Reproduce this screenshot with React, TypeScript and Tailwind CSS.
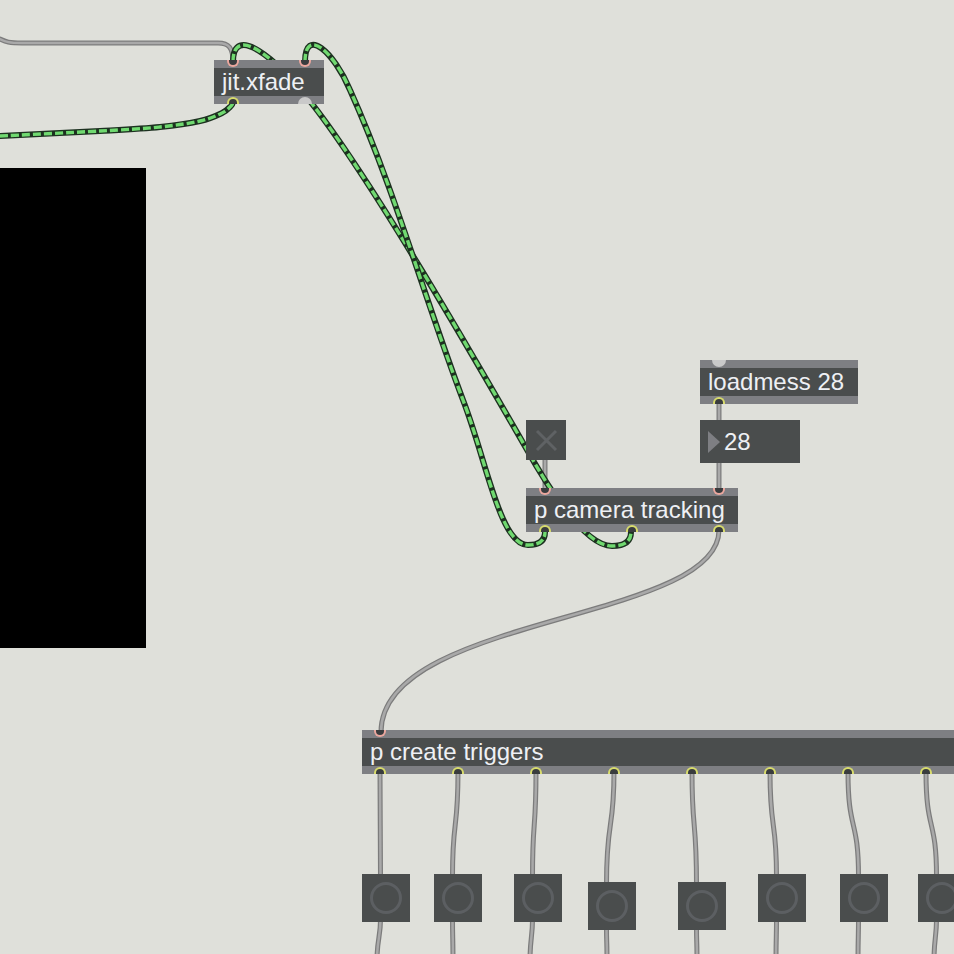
import React from "react";

type Pt = [number, number];

// catmull-rom through the points, turned into cubic segments
function smooth(pts: Pt[]): string {
  let d = `M${pts[0][0]} ${pts[0][1]}`;
  for (let i = 0; i < pts.length - 1; i++) {
    const p0 = pts[i - 1] || pts[i];
    const p1 = pts[i];
    const p2 = pts[i + 1];
    const p3 = pts[i + 2] || p2;
    const c1x = p1[0] + (p2[0] - p0[0]) / 6;
    const c1y = p1[1] + (p2[1] - p0[1]) / 6;
    const c2x = p2[0] - (p3[0] - p1[0]) / 6;
    const c2y = p2[1] - (p3[1] - p1[1]) / 6;
    d += ` C${c1x.toFixed(1)} ${c1y.toFixed(1)} ${c2x.toFixed(1)} ${c2y.toFixed(1)} ${p2[0]} ${p2[1]}`;
  }
  return d;
}

// camera tracking out 2 -> xfade in 1
const cordA =
  "M233 62 C233 24 274 55 313 105 C375 185 480 368 526 448 C549 489 585 546 612 546 C624 546 631 542 631 532";
// camera tracking out 1 -> xfade in 2
const cordB =
  "M305 62 C305 26 334 52 350 90 C395 190 425 300 463 400 C487 462 500 545 528 545 C540 545 545 540 545 532";

const cordLeft: Pt[] = [[0, 136], [100, 131], [160, 127], [200, 121], [222, 113], [231, 106], [233, 102]];

const buttons: { x: number; y: number; cls: string }[] = [
  { x: 362, y: 874, cls: "left-[362px] top-[874px]" },
  { x: 434, y: 874, cls: "left-[434px] top-[874px]" },
  { x: 514, y: 874, cls: "left-[514px] top-[874px]" },
  { x: 588, y: 882, cls: "left-[588px] top-[882px]" },
  { x: 678, y: 882, cls: "left-[678px] top-[882px]" },
  { x: 758, y: 874, cls: "left-[758px] top-[874px]" },
  { x: 840, y: 874, cls: "left-[840px] top-[874px]" },
  { x: 918, y: 874, cls: "left-[918px] top-[874px]" },
];
const outletX = [380, 458, 536, 614, 692, 770, 848, 926];
const belowEnd = [377, 453, 530, 607, 697, 776, 858, 934];

function Cord({ d, matrix }: { d: string; matrix?: boolean }) {
  if (matrix) {
    return (
      <g fill="none">
        <path d={d} stroke="#1d3120" strokeWidth={6} strokeLinecap="round" />
        <path d={d} stroke="#70d970" strokeWidth={3.4} strokeDasharray="8 3" />
      </g>
    );
  }
  return (
    <g fill="none">
      <path d={d} stroke="#7c7c7c" strokeWidth={5} strokeLinecap="round" />
      <path d={d} stroke="#a9a9a9" strokeWidth={2.5} strokeLinecap="round" />
    </g>
  );
}

const Inlet = () => (
  <div className="w-[12px] h-[7px] rounded-b-full border-2 border-t-0 border-[#eba79e] bg-[#393c3e]" />
);
const Outlet = () => (
  <div className="w-[12px] h-[7px] rounded-t-full border-2 border-b-0 border-[#d8dc6c] bg-[#393c3e]" />
);
const GrayIn = () => <div className="w-[14px] h-[7px] rounded-b-full bg-[#c9c9c9]" />;
const GrayOut = () => <div className="w-[14px] h-[7px] rounded-t-full bg-[#c9c9c9]" />;

function MaxBox({
  cls,
  text,
  top,
  bottom,
}: {
  cls: string;
  text: string;
  top: React.ReactNode;
  bottom: React.ReactNode;
}) {
  return (
    <div className={`absolute flex flex-col ${cls}`}>
      <div className="h-[8px] bg-[#7e7f83] flex items-start">{top}</div>
      <div className="h-[28px] bg-[#4a4d4d] pl-[8px] text-[24px] leading-[28px] text-[#eef0f4] whitespace-nowrap">
        {text}
      </div>
      <div className="h-[8px] bg-[#7e7f83] flex items-end">{bottom}</div>
    </div>
  );
}

export default function App() {
  return (
    <div className="relative w-[954px] h-[954px] overflow-hidden bg-[#dfe0da] font-['Liberation_Sans',Arial,sans-serif]">
      <div className="absolute left-0 top-[168px] w-[146px] h-[480px] bg-black" />

      <svg className="absolute left-0 top-0" width={954} height={954}>
        <Cord d="M0 39 C6 42 9 43 22 43 L218 43 C229 43 233 48 233 62" />
        <Cord d="M719 400 L719 422" />
        <Cord d="M719 460 L719 490" />
        <Cord d="M545 458 L545 490" />
        <Cord d="M719 530 C719 622 381 615 381 732" />
        {outletX.map((ox, i) => {
          const b = buttons[i];
          const ex = b.x + 18.5;
          return <Cord key={"o" + i} d={`M${ox} 772 C${ox} 832 ${ex} 818 ${ex} ${b.y + 2}`} />;
        })}
        {buttons.map((b, i) => {
          const sx = b.x + 18.5;
          const ex = belowEnd[i];
          return <Cord key={"b" + i} d={`M${sx} ${b.y + 46} C${sx} ${b.y + 62} ${ex} 940 ${ex} 960`} />;
        })}
        <Cord matrix d={smooth(cordLeft)} />
        <Cord matrix d={cordA} />
        <Cord matrix d={cordB} />
      </svg>

      <MaxBox
        cls="left-[214px] top-[60px] w-[110px]"
        text="jit.xfade"
        top={
          <div className="flex w-full justify-between px-[13px]">
            <Inlet />
            <Inlet />
          </div>
        }
        bottom={
          <div className="flex w-full justify-between items-end pl-[13px] pr-[12px]">
            <Outlet />
            <GrayOut />
          </div>
        }
      />

      <MaxBox
        cls="left-[700px] top-[360px] w-[158px]"
        text="loadmess 28"
        top={
          <div className="pl-[12px]">
            <GrayIn />
          </div>
        }
        bottom={
          <div className="pl-[13px]">
            <Outlet />
          </div>
        }
      />

      <div className="absolute left-[700px] top-[420px] w-[100px] h-[43px] bg-[#4a4d4d] flex items-center">
        <div className="ml-[8px] w-0 h-0 border-y-[11px] border-y-transparent border-l-[12px] border-l-[#7e7f83]" />
        <span className="ml-[4px] text-[24px] leading-[28px] text-[#eef0f4]">28</span>
      </div>

      <div className="absolute left-[526px] top-[420px] w-[40px] h-[40px] bg-[#4a4d4d]">
        <svg width={40} height={40} className="block">
          <path d="M11 11 L30 30 M30 11 L11 30" stroke="#5f6264" strokeWidth={3} />
        </svg>
      </div>

      <MaxBox
        cls="left-[526px] top-[488px] w-[212px]"
        text="p camera tracking"
        top={
          <div className="flex w-full justify-between px-[13px]">
            <Inlet />
            <Inlet />
          </div>
        }
        bottom={
          <div className="flex w-full justify-between items-end px-[13px]">
            <Outlet />
            <Outlet />
            <Outlet />
          </div>
        }
      />

      <MaxBox
        cls="left-[362px] top-[730px] w-[700px]"
        text="p create triggers"
        top={
          <div className="pl-[12px]">
            <Inlet />
          </div>
        }
        bottom={
          <div className="flex gap-[66px] items-end pl-[12px]">
            {outletX.map((x) => (
              <Outlet key={x} />
            ))}
            <Outlet />
          </div>
        }
      />

      {buttons.map((b) => (
        <div
          key={b.x}
          className={`absolute w-[48px] h-[48px] bg-[#4a4d4d] flex items-center justify-center ${b.cls}`}
        >
          <div className="w-[32px] h-[32px] rounded-full border-[3px] border-[#5c5f62]" />
        </div>
      ))}
    </div>
  );
}
